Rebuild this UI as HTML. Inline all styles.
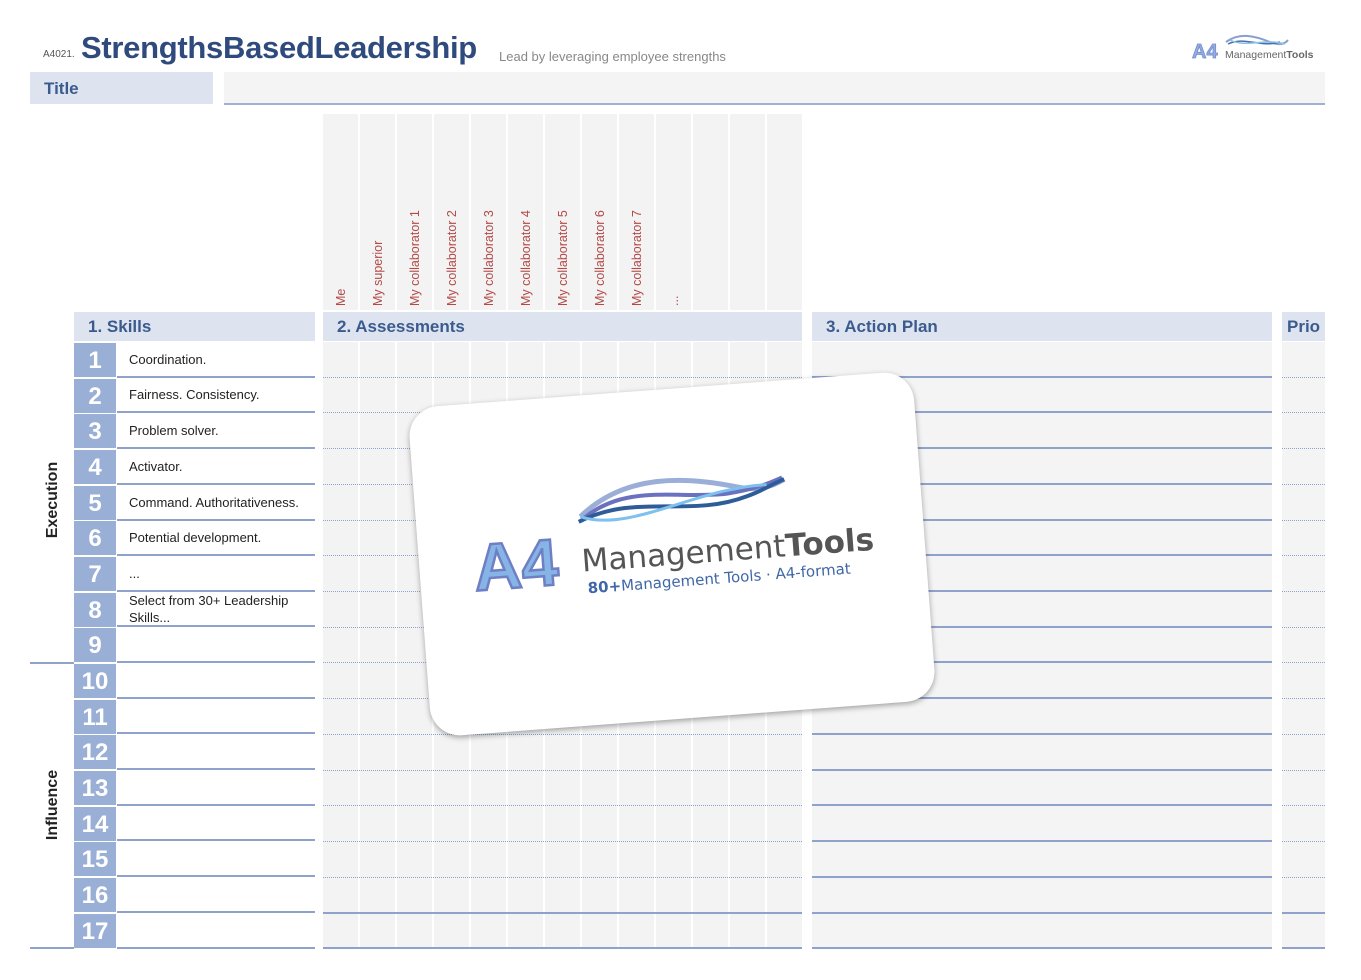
<!DOCTYPE html>
<html><head><meta charset="utf-8">
<style>
*{margin:0;padding:0;box-sizing:border-box}
body{width:1361px;height:980px;background:#fff;position:relative;overflow:hidden;font-family:"Liberation Sans",Arial,sans-serif}
.a{position:absolute}
.hd{background:#dde4f0;color:#3b5b8e;font-weight:bold;font-size:17px;line-height:29px;padding-left:14px}
.col{position:absolute;top:114px;height:196px;background:#f3f3f3;width:35px}
.col span{position:absolute;left:50%;bottom:-10px;transform-origin:0 0;transform:rotate(-90deg) translate(0,-50%);white-space:nowrap;color:#b24a48;font-size:12.5px}
.num{position:absolute;left:74px;width:42px;background:#9aafd6;color:#fff;font-weight:bold;font-size:24px;text-align:center}
.sk{position:absolute;left:117px;width:198px;border-bottom:2px solid #8ea2cc;font-size:13px;color:#222;padding-left:12px;display:flex;align-items:center;line-height:17px}
.acol{position:absolute;top:342px;height:606px;background:#f3f3f3;width:35px}
.dl{position:absolute;border-top:1px dotted #8ea2cc;height:0}
.sl{position:absolute;border-top:2px solid #8ea2cc;height:0}
.vt{position:absolute;transform:rotate(-90deg);font-weight:bold;font-size:16px;color:#222;white-space:nowrap}
</style></head><body>

<div class="a" style="left:43px;top:49px;font-size:10px;color:#555">A4021.</div>
<div class="a" style="left:81px;top:30px;font-size:31px;font-weight:bold;color:#2f4a7d;letter-spacing:-0.3px">StrengthsBasedLeadership</div>
<div class="a" style="left:499px;top:49px;font-size:13px;color:#888">Lead by leveraging employee strengths</div>

<svg class="a" style="left:1190px;top:30px" width="130" height="34" viewBox="0 0 130 34">
<path d="M36 12 C50 2,65 6,80 12 C90 16,95 14,98 10" stroke="#8aa0cc" stroke-width="2" fill="none"/>
<path d="M38 14 C55 6,70 18,90 12" stroke="#4a6fa8" stroke-width="1.5" fill="none"/>
<path d="M40 10 C55 18,75 8,95 14" stroke="#88c0ea" stroke-width="1.5" fill="none"/>
<text x="2" y="28" font-family="Liberation Sans" font-weight="bold" font-size="20" fill="#8eaee0" stroke="#7a8ccc" stroke-width="0.8">A4</text>
<text x="35" y="28" font-family="Liberation Sans" font-size="10.5" fill="#666">Management<tspan font-weight="bold">Tools</tspan></text>
</svg>

<div class="a hd" style="left:30px;top:72px;width:183px;height:32px;line-height:34px">Title</div>
<div class="a" style="left:224px;top:72px;width:1101px;height:33px;background:#f4f4f4;border-bottom:2px solid #9fb2d3"></div>

<div class="col" style="left:323px"><span>Me</span></div>
<div class="col" style="left:360px"><span>My superior</span></div>
<div class="col" style="left:397px"><span>My collaborator 1</span></div>
<div class="col" style="left:434px"><span>My collaborator 2</span></div>
<div class="col" style="left:471px"><span>My collaborator 3</span></div>
<div class="col" style="left:508px"><span>My collaborator 4</span></div>
<div class="col" style="left:545px"><span>My collaborator 5</span></div>
<div class="col" style="left:582px"><span>My collaborator 6</span></div>
<div class="col" style="left:619px"><span>My collaborator 7</span></div>
<div class="col" style="left:656px"><span>...</span></div>
<div class="col" style="left:693px"></div>
<div class="col" style="left:730px"></div>
<div class="col" style="left:767px"></div>

<div class="a hd" style="left:74px;top:312px;width:241px">1. Skills</div>
<div class="a hd" style="left:323px;top:312px;width:479px">2. Assessments</div>
<div class="a hd" style="left:812px;top:312px;width:460px">3. Action Plan</div>
<div class="a hd" style="left:1282px;top:312px;width:43px;padding-left:5px">Prio</div>

<div class="acol" style="left:323px"></div><div class="acol" style="left:360px"></div><div class="acol" style="left:397px"></div><div class="acol" style="left:434px"></div><div class="acol" style="left:471px"></div><div class="acol" style="left:508px"></div><div class="acol" style="left:545px"></div><div class="acol" style="left:582px"></div><div class="acol" style="left:619px"></div><div class="acol" style="left:656px"></div><div class="acol" style="left:693px"></div><div class="acol" style="left:730px"></div><div class="acol" style="left:767px"></div>
<div class="a" style="left:812px;top:342px;width:460px;height:606px;background:#f4f4f4"></div>
<div class="a" style="left:1282px;top:342px;width:43px;height:606px;background:#f4f4f4"></div>

<div class="num" style="top:343px;height:34px;line-height:36px">1</div>
<div class="num" style="top:379px;height:34px;line-height:36px">2</div>
<div class="num" style="top:414px;height:34px;line-height:36px">3</div>
<div class="num" style="top:450px;height:34px;line-height:36px">4</div>
<div class="num" style="top:486px;height:34px;line-height:36px">5</div>
<div class="num" style="top:521px;height:34px;line-height:36px">6</div>
<div class="num" style="top:557px;height:34px;line-height:36px">7</div>
<div class="num" style="top:593px;height:34px;line-height:36px">8</div>
<div class="num" style="top:628px;height:34px;line-height:36px">9</div>
<div class="num" style="top:664px;height:34px;line-height:36px">10</div>
<div class="num" style="top:700px;height:34px;line-height:36px">11</div>
<div class="num" style="top:735px;height:34px;line-height:36px">12</div>
<div class="num" style="top:771px;height:34px;line-height:36px">13</div>
<div class="num" style="top:807px;height:34px;line-height:36px">14</div>
<div class="num" style="top:842px;height:34px;line-height:36px">15</div>
<div class="num" style="top:878px;height:34px;line-height:36px">16</div>
<div class="num" style="top:914px;height:34px;line-height:36px">17</div>

<div class="sk" style="top:342px;height:36px">Coordination.</div>
<div class="sk" style="top:378px;height:35px">Fairness. Consistency.</div>
<div class="sk" style="top:413px;height:36px">Problem solver.</div>
<div class="sk" style="top:449px;height:36px">Activator.</div>
<div class="sk" style="top:485px;height:36px">Command. Authoritativeness.</div>
<div class="sk" style="top:521px;height:35px">Potential development.</div>
<div class="sk" style="top:556px;height:36px">...</div>
<div class="sk" style="top:592px;height:35px">Select from 30+ Leadership<br>Skills...</div>
<div class="sk" style="top:627px;height:36px"></div>
<div class="sk" style="top:663px;height:36px"></div>
<div class="sk" style="top:699px;height:35px"></div>
<div class="sk" style="top:734px;height:36px"></div>
<div class="sk" style="top:770px;height:36px"></div>
<div class="sk" style="top:806px;height:35px"></div>
<div class="sk" style="top:841px;height:36px"></div>
<div class="sk" style="top:877px;height:36px"></div>
<div class="sk" style="top:913px;height:36px"></div>

<div class="dl" style="left:323px;width:479px;top:377px"></div><div class="sl" style="left:812px;width:460px;top:376px"></div><div class="dl" style="left:1282px;width:43px;top:377px"></div>
<div class="dl" style="left:323px;width:479px;top:412px"></div><div class="sl" style="left:812px;width:460px;top:411px"></div><div class="dl" style="left:1282px;width:43px;top:412px"></div>
<div class="dl" style="left:323px;width:479px;top:448px"></div><div class="sl" style="left:812px;width:460px;top:447px"></div><div class="dl" style="left:1282px;width:43px;top:448px"></div>
<div class="dl" style="left:323px;width:479px;top:484px"></div><div class="sl" style="left:812px;width:460px;top:483px"></div><div class="dl" style="left:1282px;width:43px;top:484px"></div>
<div class="dl" style="left:323px;width:479px;top:520px"></div><div class="sl" style="left:812px;width:460px;top:519px"></div><div class="dl" style="left:1282px;width:43px;top:520px"></div>
<div class="dl" style="left:323px;width:479px;top:555px"></div><div class="sl" style="left:812px;width:460px;top:554px"></div><div class="dl" style="left:1282px;width:43px;top:555px"></div>
<div class="dl" style="left:323px;width:479px;top:591px"></div><div class="sl" style="left:812px;width:460px;top:590px"></div><div class="dl" style="left:1282px;width:43px;top:591px"></div>
<div class="dl" style="left:323px;width:479px;top:627px"></div><div class="sl" style="left:812px;width:460px;top:626px"></div><div class="dl" style="left:1282px;width:43px;top:627px"></div>
<div class="dl" style="left:323px;width:479px;top:662px"></div><div class="sl" style="left:812px;width:460px;top:661px"></div><div class="dl" style="left:1282px;width:43px;top:662px"></div>
<div class="dl" style="left:323px;width:479px;top:698px"></div><div class="sl" style="left:812px;width:460px;top:697px"></div><div class="dl" style="left:1282px;width:43px;top:698px"></div>
<div class="dl" style="left:323px;width:479px;top:734px"></div><div class="sl" style="left:812px;width:460px;top:733px"></div><div class="dl" style="left:1282px;width:43px;top:734px"></div>
<div class="dl" style="left:323px;width:479px;top:770px"></div><div class="sl" style="left:812px;width:460px;top:769px"></div><div class="dl" style="left:1282px;width:43px;top:770px"></div>
<div class="dl" style="left:323px;width:479px;top:805px"></div><div class="sl" style="left:812px;width:460px;top:804px"></div><div class="dl" style="left:1282px;width:43px;top:805px"></div>
<div class="dl" style="left:323px;width:479px;top:841px"></div><div class="sl" style="left:812px;width:460px;top:840px"></div><div class="dl" style="left:1282px;width:43px;top:841px"></div>
<div class="dl" style="left:323px;width:479px;top:877px"></div><div class="sl" style="left:812px;width:460px;top:876px"></div><div class="dl" style="left:1282px;width:43px;top:877px"></div>
<div class="sl" style="left:323px;width:479px;top:912px"></div><div class="sl" style="left:812px;width:460px;top:912px"></div><div class="sl" style="left:1282px;width:43px;top:912px"></div>
<div class="sl" style="left:323px;width:479px;top:947px"></div><div class="sl" style="left:812px;width:460px;top:947px"></div><div class="sl" style="left:1282px;width:43px;top:947px"></div>

<div class="sl" style="left:30px;width:44px;top:662px"></div>
<div class="sl" style="left:30px;width:44px;top:947px"></div>
<div class="vt" style="left:11px;top:491px;width:84px;text-align:center">Execution</div>
<div class="vt" style="left:11px;top:796px;width:84px;text-align:center">Influence</div>

<div class="a" style="left:419px;top:389px;width:506px;height:330px;background:#fff;border-radius:30px;transform:rotate(-4.3deg);box-shadow:0 2px 6px rgba(0,0,0,.35)"></div>
<svg class="a" style="left:470px;top:470px" width="410" height="130" viewBox="0 0 410 130">
<g transform="rotate(-4.3 200 65)">
<path d="M112 40 C160 0,220 8,270 22 C290 28,305 25,318 18" stroke="#9aaed8" stroke-width="5" fill="none"/>
<path d="M115 42 C160 10,210 30,260 28 C285 26,300 22,316 16" stroke="#6a72c0" stroke-width="4" fill="none"/>
<path d="M110 45 C170 20,220 50,280 32 C295 28,305 22,318 18" stroke="#2e5c98" stroke-width="4" fill="none"/>
<path d="M112 40 C160 60,230 20,300 22" stroke="#7ec0ee" stroke-width="3" fill="none"/>
<text x="2" y="106" font-family="Liberation Sans" font-weight="bold" font-size="66" fill="#86b4e6" stroke="#6f7fc4" stroke-width="2.5">A4</text>
<text x="110" y="95" font-family="DejaVu Sans" font-size="31" fill="#555">Management<tspan font-weight="bold">Tools</tspan></text>
<text x="114" y="117" font-family="DejaVu Sans" font-size="15" fill="#3f67a8"><tspan font-weight="bold">80+</tspan>Management Tools · A4-format</text>
</g>
</svg>
</body></html>
